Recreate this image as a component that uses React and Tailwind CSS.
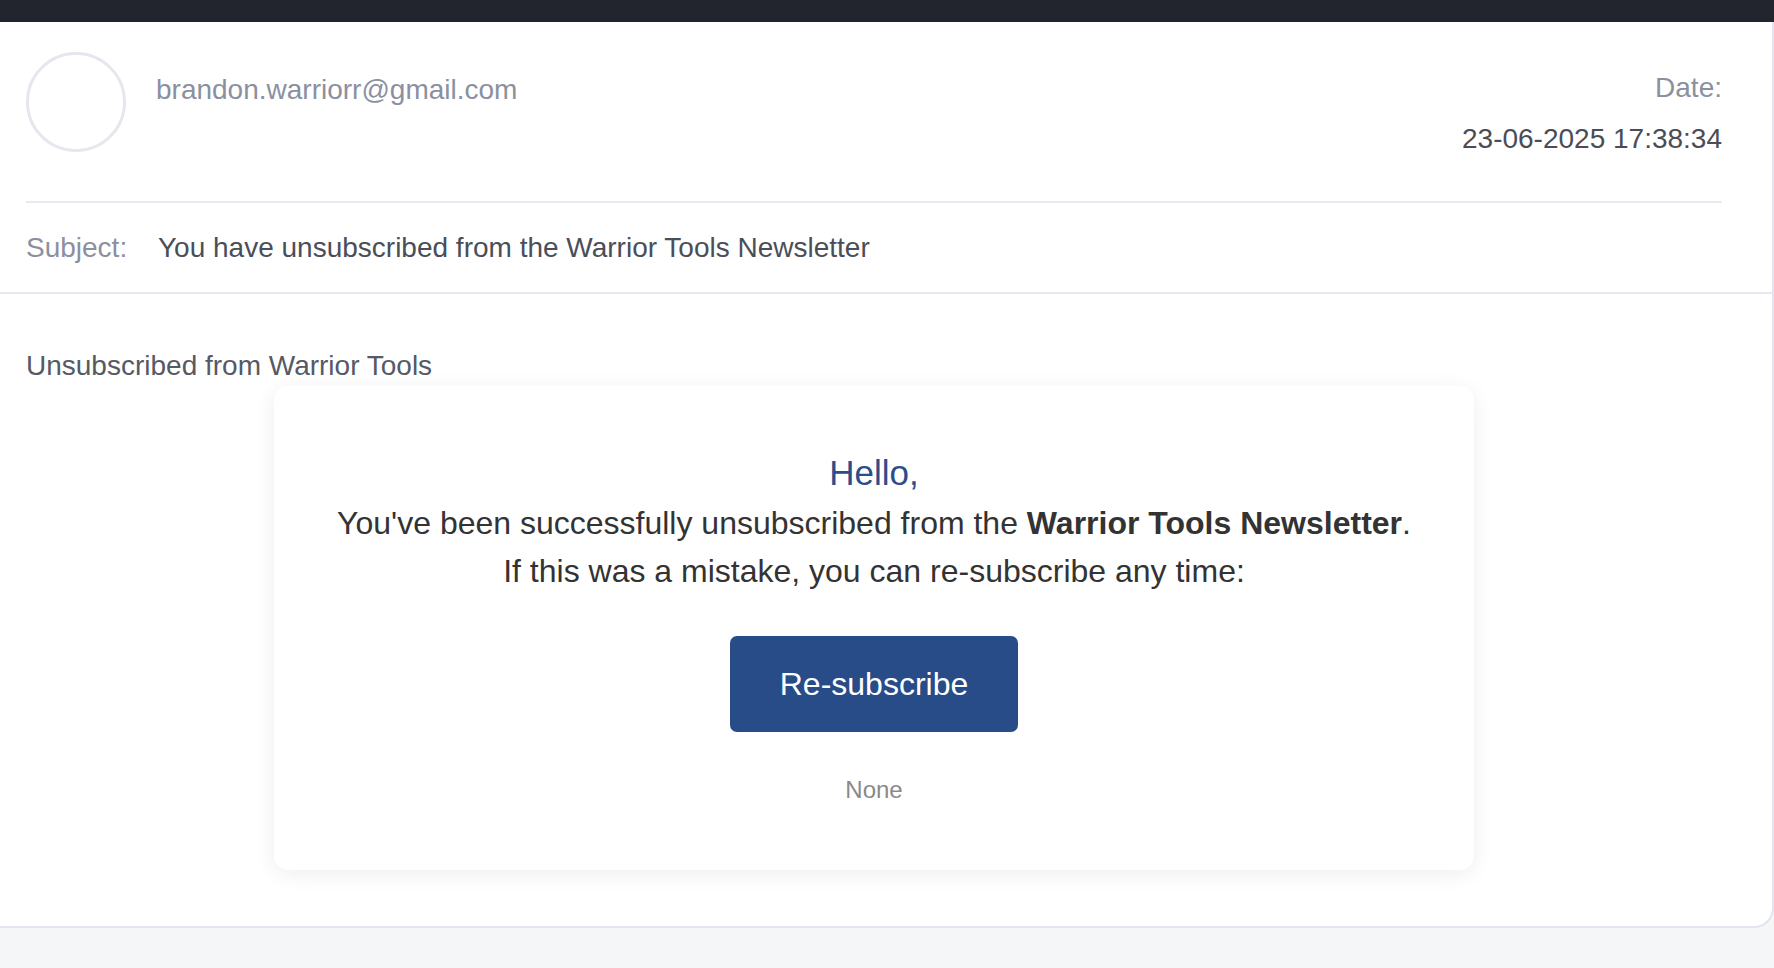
export default function App() {
    return (
        <div className="min-h-screen w-full bg-[#f5f6f8] font-['Liberation_Sans',Arial,sans-serif]">
            {/* Top bar */}
            <div className="h-[22px] bg-[#22252e]" />

            {/* Message card */}
            <div className="bg-white border-r-2 border-b-2 border-[#e4e4ef] rounded-br-[20px]">
                {/* Sender header */}
                <div className="pl-[26px] pr-[50px]">
                    <div className="flex items-start h-[179px] pt-[30px]">
                        <div className="w-[100px] h-[100px] shrink-0 rounded-full border-[3px] border-[#e6e6ef]" />
                        <div className="ml-[30px] mt-[22px] text-[28px] leading-[32px] text-[#8b90a0]">brandon.warriorr@gmail.com</div>
                        <div className="ml-auto mt-[20px] text-right text-[28px] leading-[32px]">
                            <div className="text-[#8b90a0]">Date:</div>
                            <div className="mt-[19px] text-[#4a4d57]">23-06-2025 17:38:34</div>
                        </div>
                    </div>
                    <div className="h-[2px] bg-[#e9e9f1]" />
                </div>

                {/* Subject */}
                <div className="flex h-[91px] pt-[29px] pl-[26px] border-b-2 border-[#e9e9f1] text-[28px] leading-[32px]">
                    <span className="w-[132px] text-[#8b90a0]">Subject:</span>
                    <span className="text-[#4a4e59]">You have unsubscribed from the Warrior Tools Newsletter</span>
                </div>

                {/* Body */}
                <div className="pl-[26px] pr-[50px] pt-[56px] pb-[56px]">
                    <div className="text-[28px] leading-[32px] text-[#555a66]">Unsubscribed from Warrior Tools</div>
                    <div className="mx-auto mt-[4px] w-[1200px] rounded-[14px] bg-white shadow-[0_4px_22px_rgba(0,0,0,0.07)] pt-[66px] pb-[64px] flex flex-col items-center text-center">
                        <div className="text-[35px] leading-[42px] text-[#2b4d8c]">Hello,</div>
                        <p className="mt-[5px] text-[32px] leading-[48px] text-[#333333]">
                            You've been successfully unsubscribed from the <strong className="font-bold">Warrior Tools Newsletter</strong>.
                            <br />
                            If this was a mistake, you can re-subscribe any time:
                        </p>
                        <button className="mt-[41px] w-[288px] h-[96px] rounded-[7px] bg-[#284c88] text-white text-[32px] leading-[38px] flex items-center justify-center">
                            Re-subscribe
                        </button>
                        <div className="mt-[42px] text-[24px] leading-[32px] text-[#8a8a8a]">None</div>
                    </div>
                </div>
            </div>
        </div>
    );
}
